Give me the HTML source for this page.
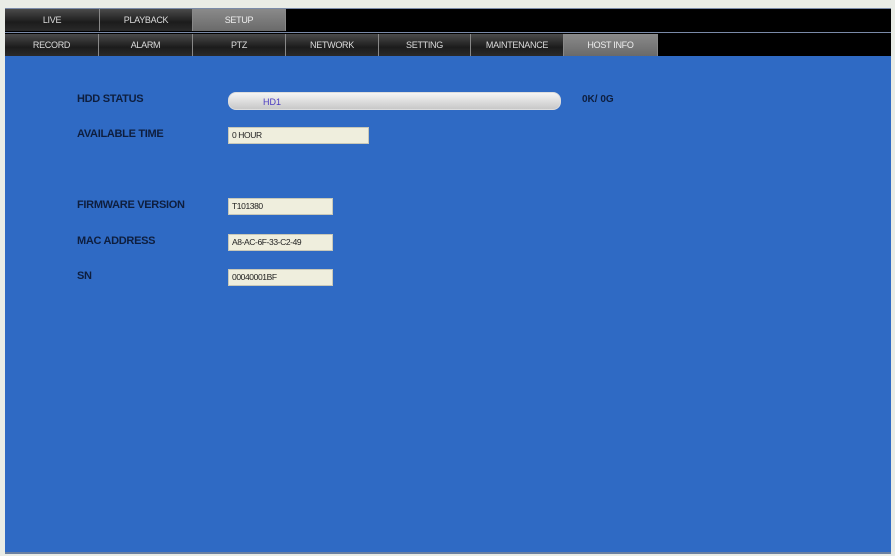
<!DOCTYPE html>
<html><head><style>
*{margin:0;padding:0;box-sizing:border-box}
body{width:895px;height:556px;background:#e9ece6;position:relative;overflow:hidden;font-family:"Liberation Sans",sans-serif}
.bar{position:absolute;left:5px;right:4px;background:#000}
.tab{position:absolute;height:22px;background:linear-gradient(#4a4a4a,#1c1c1c 60%,#2a2a2a);color:#ddd;font-size:9px;text-align:center;line-height:22px;border-right:1px solid #888;letter-spacing:-0.3px}
.tab.sel{background:linear-gradient(#8a8a8a,#6a6a6a);color:#eee}
.main{position:absolute;left:5px;top:56px;width:886px;height:498px;background:#2f6ac4;border-bottom:2px solid #6a7fa0}
.lbl{position:absolute;left:77px;color:#0e1e3e;font-size:11px;font-weight:bold;letter-spacing:-0.3px}
.box{position:absolute;left:228px;background:#efeedd;border:1px solid #c8c8b8;font-size:8.5px;color:#222;padding-left:3px;line-height:15px;letter-spacing:-0.4px}
</style></head><body>
<div class="bar" style="top:8px;height:24px;border-top:1px solid #7a8aa8"></div>
<div class="tab" style="left:5px;top:9px;width:95px">LIVE</div>
<div class="tab" style="left:100px;top:9px;width:93px">PLAYBACK</div>
<div class="tab sel" style="left:193px;top:9px;width:93px">SETUP</div>
<div class="bar" style="top:32px;height:24px;border-top:1px solid #7a8aa8"></div>
<div class="tab" style="left:5px;top:34px;width:94px">RECORD</div>
<div class="tab" style="left:99px;top:34px;width:94px">ALARM</div>
<div class="tab" style="left:193px;top:34px;width:93px">PTZ</div>
<div class="tab" style="left:286px;top:34px;width:93px">NETWORK</div>
<div class="tab" style="left:379px;top:34px;width:92px">SETTING</div>
<div class="tab" style="left:471px;top:34px;width:93px">MAINTENANCE</div>
<div class="tab sel" style="left:564px;top:34px;width:94px">HOST INFO</div>
<div class="main"></div>
<div class="lbl" style="top:93px">HDD STATUS</div>
<div style="position:absolute;left:228px;top:92px;width:333px;height:18px;border-radius:8px;background:linear-gradient(#f4f4f4,#c8c8c8);border:1px solid #ddd"><span style="position:absolute;left:34px;top:4px;font-size:9px;color:#4a3ac0">HD1</span></div>
<div style="position:absolute;left:582px;top:94px;color:#0e1e3e;font-size:10px;font-weight:bold">0K/ 0G</div>
<div class="lbl" style="top:128px">AVAILABLE TIME</div>
<div class="box" style="top:127px;width:141px;height:17px">0 HOUR</div>
<div class="lbl" style="top:199px">FIRMWARE VERSION</div>
<div class="box" style="top:198px;width:105px;height:17px">T101380</div>
<div class="lbl" style="top:235px">MAC ADDRESS</div>
<div class="box" style="top:234px;width:105px;height:17px">A8-AC-6F-33-C2-49</div>
<div class="lbl" style="top:270px">SN</div>
<div class="box" style="top:269px;width:105px;height:17px">00040001BF</div>
</body></html>
